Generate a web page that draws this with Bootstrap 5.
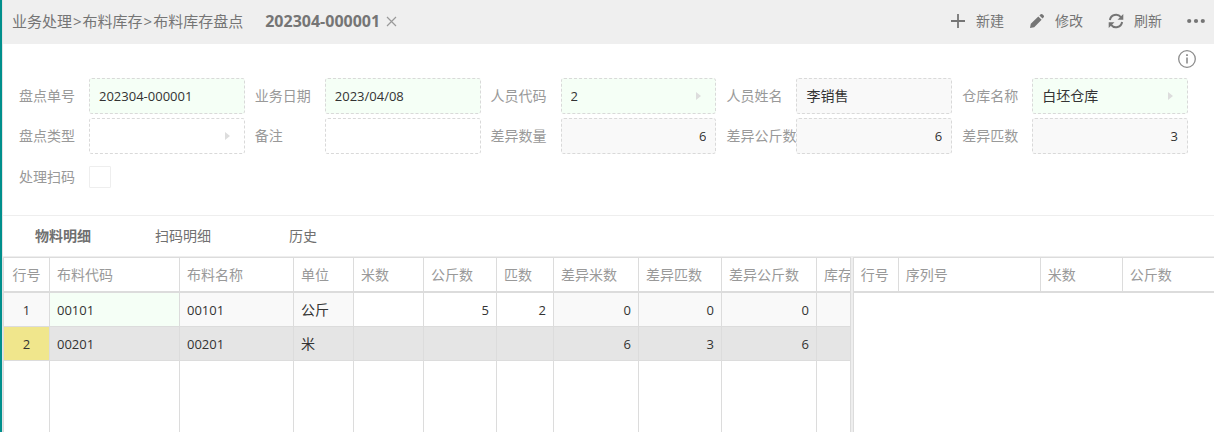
<!DOCTYPE html>
<html lang="zh-CN">
<head>
<meta charset="utf-8">
<meta name="viewport" content="width=device-width, initial-scale=1">
<title>布料库存盘点</title>
<link href="https://cdn.jsdelivr.net/npm/bootstrap@5.3.0/dist/css/bootstrap.min.css" rel="stylesheet">
<style>
  body { font: 14px/20px "Open Sans", "Noto Sans CJK SC", sans-serif; color: #333; background: #fff; border-left: 2px solid #008f8c; }
  button { border: 0; background: none; padding: 0; color: inherit; }
  svg { display: block; flex: none; }
  .app { border-left: 1px solid #e4e4e4; }
  .topbar { background: #efefef; height: 44px; padding: 0 9px 2px; color: #757575; }
  .crumbs { font-size: 15px; }
  .crumbs a { color: #757575; text-decoration: none; }
  .crumbs span { padding: 0 1px; }
  .doc-tab { font-size: 16px; font-weight: 700; margin-left: 22px; gap: 6px; }
  .doc-tab button { color: #999; }
  .actions { gap: 25px; }
  .actions button { display: flex; align-items: center; gap: 10px; }
  .info-bar { height: 30px; margin-bottom: 4px; padding-right: 18px; color: #8c8c8c; }
  .fields { padding: 0 16px 19px; row-gap: 4px; }
  .field { display: flex; align-items: center; min-height: 36px; padding-right: 10px; }
  .field label { flex: 0 0 70px; color: #999; white-space: nowrap; }
  .field-box { display: flex; flex: 1; min-width: 0; height: 36px; border: 1px dashed #d9d9d9; border-radius: 3px; background: #fff; }
  .field-box input { flex: 1; min-width: 0; border: 0; background: none; outline: 0; padding: 0 9px; color: #333; }
  .is-key { background: #f5fff6; }
  .is-locked { background: #f9f9f9; }
  .field-box button { padding-right: 14px; color: #ddd; }
  .num { font-size: 13px; }
  .field-tall { min-height: 38px; }
  .field-tall input { appearance: none; width: 22px; height: 22px; border: 1px solid #eee; border-radius: 1px; background: #fff; margin: 0; }
  .tabs { height: 41px; border-top: 1px solid #eee; color: #707070; }
  .tabs button { width: 120px; }
  .tabs .active { font-weight: 700; }
  .panes { min-height: 0; border-top: 1px solid #eee; background: #eee; gap: 2px; }
  .pane { background: #fff; border: solid #dcdcdc; border-width: 1px 0 0 1px; overflow: hidden; }
  .pane-main { flex: 0 0 70%; border-right-width: 1px; }
  .sheet { table-layout: fixed; border-collapse: separate; border-spacing: 0; height: 100%; }
  .sheet th, .sheet td { border: solid #dcdcdc; border-width: 0 1px 1px 0; padding: 0 7px; height: 34px; white-space: nowrap; overflow: hidden; }
  .sheet th { height: 35px; border-bottom-width: 2px; font-weight: 400; color: #999; }
  .sheet .filler td { height: auto; border-bottom: 0; }
  .lines { width: 913px; }
  .lines tr > :first-child { text-align: center; padding: 0; }
  .serials .filler td { border: 0; }
  .serials th:last-child { border-right: 0; }
  .picked td { background: #e5e5e5; }
  .picked td:first-child { background: #f0e68c; }
</style>
<script src="https://cdn.jsdelivr.net/npm/bootstrap@5.3.0/dist/js/bootstrap.bundle.min.js"></script>
</head>
<body>
<div class="app vh-100 d-flex flex-column overflow-hidden">
  <header class="topbar d-flex align-items-center flex-shrink-0">
    <nav class="crumbs" aria-label="路径"><a href="#">业务处理</a><span>&gt;</span><a href="#">布料库存</a><span>&gt;</span><a href="#">布料库存盘点</a></nav>
    <div class="doc-tab d-flex align-items-center">202304-000001
      <button type="button" aria-label="关闭"><svg width="11" height="11" viewBox="0 0 11 11" stroke="currentColor" stroke-width="1.2"><path d="M1 1l9 9M10 1l-9 9"/></svg></button>
    </div>
    <div class="actions d-flex align-items-center ms-auto">
      <button type="button"><svg width="16" height="16" viewBox="0 0 16 16" stroke="currentColor" stroke-width="1.8"><path d="M8 1v14M1 8h14"/></svg>新建</button>
      <button type="button"><svg width="16" height="16" viewBox="0 0 16 16" fill="currentColor"><path d="M1 15l.8-4.2 7.5-7.4 3.300 3.300-7.400 7.500zM10.400 2.400l1.300-1.200q1-.7 2 .2l1 1q.8 1 0 1.900l-1.200 1.300z"/></svg>修改</button>
      <button type="button"><svg width="16" height="16" viewBox="0 0 16 16"><path d="M1.900 7A6.200 6.200 0 0 1 12.900 4.100M14.100 9A6.200 6.200 0 0 1 3.100 11.900" fill="none" stroke="currentColor" stroke-width="2"/><path d="M15.300 1v5.800H9.500zM.7 15V9.200h5.800z" fill="currentColor"/></svg>刷新</button>
      <button type="button" aria-label="更多"><svg width="18" height="6" viewBox="0 0 18 6" fill="currentColor"><circle cx="2.200" cy="3" r="2.100"/><circle cx="9" cy="3" r="2.100"/><circle cx="15.800" cy="3" r="2.100"/></svg></button>
    </div>
  </header>

  <div class="info-bar d-flex align-items-center justify-content-end flex-shrink-0">
    <button type="button" aria-label="信息"><svg width="18" height="18" viewBox="0 0 18 18" fill="none" stroke="currentColor"><circle cx="9" cy="9" r="8.300" stroke-width="1.300"/><path d="M9 7.500v6" stroke-width="1.600"/><path d="M9 4.200v1.800" stroke-width="1.800"/></svg></button>
  </div>

  <form class="fields row row-cols-5 g-0 flex-shrink-0">
    <div class="field"><label for="f1">盘点单号</label><div class="field-box is-key"><input id="f1" class="num" value="202304-000001"></div></div>
    <div class="field"><label for="f2">业务日期</label><div class="field-box is-key"><input id="f2" class="num" value="2023/04/08"></div></div>
    <div class="field"><label for="f3">人员代码</label><div class="field-box is-key"><input id="f3" class="num" value="2"><button type="button" aria-label="选择人员"><svg width="5" height="8" viewBox="0 0 5 8" fill="currentColor"><path d="M0 0l5 4-5 4z"/></svg></button></div></div>
    <div class="field"><label for="f4">人员姓名</label><div class="field-box is-locked"><input id="f4" value="李销售" readonly></div></div>
    <div class="field"><label for="f5">仓库名称</label><div class="field-box is-key"><input id="f5" value="白坯仓库"><button type="button" aria-label="选择仓库"><svg width="5" height="8" viewBox="0 0 5 8" fill="currentColor"><path d="M0 0l5 4-5 4z"/></svg></button></div></div>
    <div class="field"><label for="f6">盘点类型</label><div class="field-box"><input id="f6"><button type="button" aria-label="选择类型"><svg width="5" height="8" viewBox="0 0 5 8" fill="currentColor"><path d="M0 0l5 4-5 4z"/></svg></button></div></div>
    <div class="field"><label for="f7">备注</label><div class="field-box"><input id="f7"></div></div>
    <div class="field"><label for="f8">差异数量</label><div class="field-box is-locked"><input id="f8" class="num text-end" value="6" readonly></div></div>
    <div class="field"><label for="f9">差异公斤数</label><div class="field-box is-locked"><input id="f9" class="num text-end" value="6" readonly></div></div>
    <div class="field"><label for="f10">差异匹数</label><div class="field-box is-locked"><input id="f10" class="num text-end" value="3" readonly></div></div>
    <div class="field field-tall"><label for="f11">处理扫码</label><input id="f11" type="checkbox"></div>
  </form>

  <div class="tabs d-flex flex-shrink-0" role="tablist">
    <button type="button" role="tab" class="active" aria-selected="true">物料明细</button>
    <button type="button" role="tab">扫码明细</button>
    <button type="button" role="tab">历史</button>
  </div>

  <main class="panes d-flex flex-grow-1">
    <section class="pane pane-main">
      <table class="sheet lines">
        <colgroup><col style="width:46px"><col style="width:130px"><col style="width:114px"><col style="width:60px"><col style="width:70px"><col style="width:73px"><col style="width:57px"><col style="width:85px"><col style="width:83px"><col style="width:95px"><col style="width:100px"></colgroup>
        <thead><tr><th>行号</th><th>布料代码</th><th>布料名称</th><th>单位</th><th>米数</th><th>公斤数</th><th>匹数</th><th>差异米数</th><th>差异匹数</th><th>差异公斤数</th><th>库存</th></tr></thead>
        <tbody>
          <tr><td class="is-locked num">1</td><td class="is-key num">00101</td><td class="is-locked num">00101</td><td class="is-locked">公斤</td><td></td><td class="num text-end">5</td><td class="num text-end">2</td><td class="is-locked num text-end">0</td><td class="is-locked num text-end">0</td><td class="is-locked num text-end">0</td><td class="is-locked"></td></tr>
          <tr class="picked"><td class="num">2</td><td class="num">00201</td><td class="num">00201</td><td>米</td><td></td><td></td><td></td><td class="num text-end">6</td><td class="num text-end">3</td><td class="num text-end">6</td><td></td></tr>
          <tr class="filler"><td></td><td></td><td></td><td></td><td></td><td></td><td></td><td></td><td></td><td></td><td></td></tr>
        </tbody>
      </table>
    </section>
    <section class="pane flex-grow-1">
      <table class="sheet serials w-100">
        <colgroup><col style="width:45px"><col style="width:142px"><col style="width:82px"><col></colgroup>
        <thead><tr><th>行号</th><th>序列号</th><th>米数</th><th>公斤数</th></tr></thead>
        <tbody><tr class="filler"><td colspan="4"></td></tr></tbody>
      </table>
    </section>
  </main>
</div>
</body>
</html>
